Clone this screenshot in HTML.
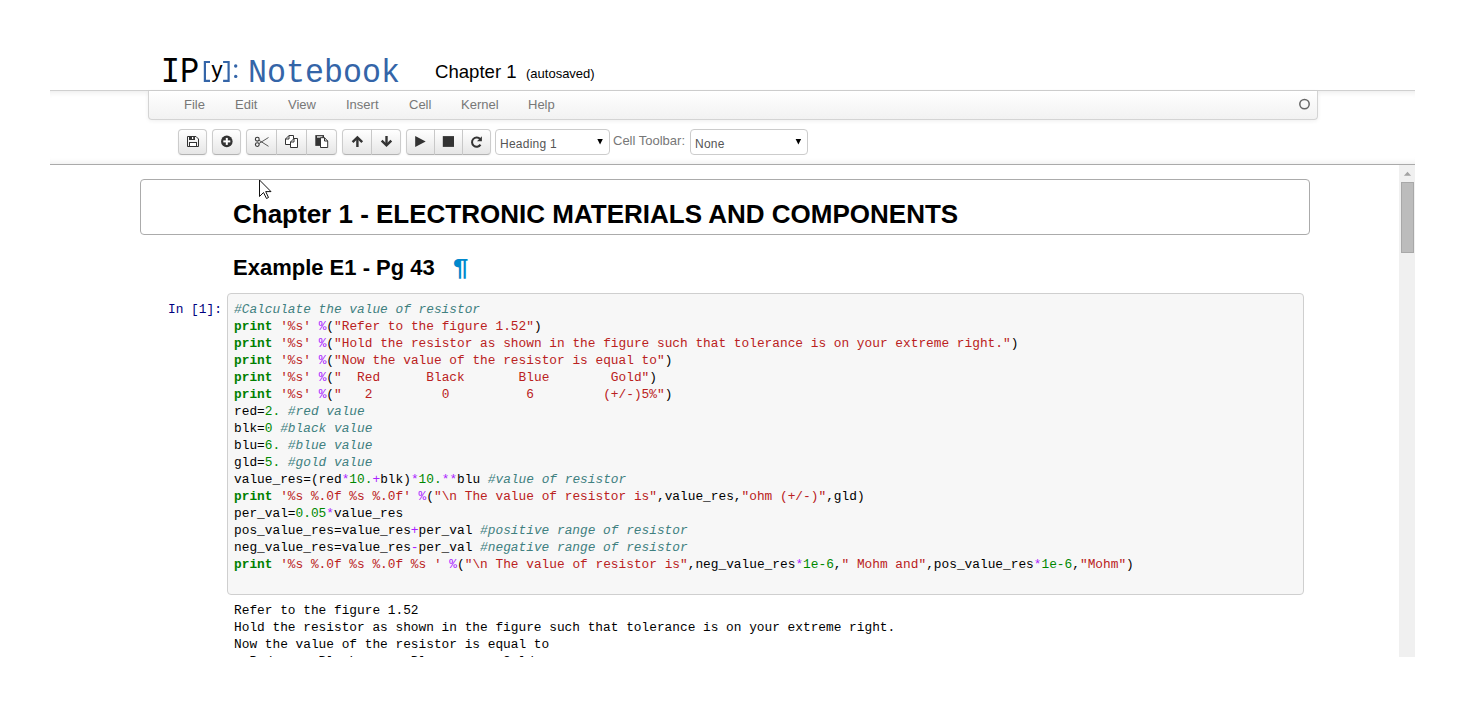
<!DOCTYPE html>
<html><head><meta charset="utf-8">
<style>
html,body{margin:0;padding:0;background:#fff;width:1465px;height:708px;overflow:hidden;position:relative;}
body{font-family:"Liberation Sans",sans-serif;color:#000;}
.abs{position:absolute;}
#title{position:absolute;left:435px;top:60px;font-size:18.6px;white-space:nowrap;line-height:24px;}
#title small{position:absolute;left:91px;top:2px;font-size:13px;}
#hdr{position:absolute;left:50px;top:90px;width:1365px;height:75px;border-top:1px solid #d0d0d0;border-bottom:1px solid #aaa;box-sizing:border-box;
 box-shadow:inset 0 7px 7px -7px rgba(0,0,0,.12), inset 0 -7px 7px -7px rgba(0,0,0,.10);}
#menubar{position:absolute;left:148px;top:91px;width:1170px;height:29px;box-sizing:border-box;border:1px solid #d4d4d4;border-top:none;border-radius:0 0 4px 4px;
 background:linear-gradient(#fff,#f2f2f2);box-shadow:0 1px 4px rgba(0,0,0,.065);}
#menubar span{position:absolute;top:6px;font-size:13px;color:#777;line-height:15px;}
.btn{position:absolute;top:129px;height:26px;box-sizing:border-box;border:1px solid #ccc;border-bottom-color:#b3b3b3;border-radius:4px;background:linear-gradient(#fff,#e6e6e6);box-shadow:inset 0 1px 0 rgba(255,255,255,.2),0 1px 2px rgba(0,0,0,.05);}
.dv{position:absolute;top:129px;width:1px;height:26px;background:#c8c8c8;}
.sel{position:absolute;top:129px;height:26px;box-sizing:border-box;border:1px solid #ccc;border-radius:4px;background:#fff;font-size:12px;color:#555;}
.sel span{position:absolute;left:4px;top:7px;line-height:14px;letter-spacing:0.25px;}
#sb{position:absolute;left:1399px;top:165px;width:16px;height:492px;background:#f0f0f0;}
pre,.code{font-family:"Liberation Mono",monospace;font-size:12.82px;line-height:17px;margin:0;white-space:pre;}
.kw{color:#008000;font-weight:bold;}
.st{color:#BA2121;}
.op{color:#AA22FF;}
.nu{color:#008800;}
.cm{color:#408080;font-style:italic;}
</style></head><body>

<div id="hdr"></div>
<div id="menubar">
  <span style="left:35px">File</span>
  <span style="left:86px">Edit</span>
  <span style="left:139px">View</span>
  <span style="left:197px">Insert</span>
  <span style="left:260px">Cell</span>
  <span style="left:312px">Kernel</span>
  <span style="left:379px">Help</span>
</div>

<div id="title">Chapter 1<small>(autosaved)</small></div>

<div class="btn" style="left:178px;width:29px"></div>
<div class="btn" style="left:212px;width:29px"></div>
<div class="btn" style="left:246px;width:91px"></div>
<div class="dv" style="left:276px"></div><div class="dv" style="left:306px"></div>
<div class="btn" style="left:342px;width:59px"></div>
<div class="dv" style="left:371px"></div>
<div class="btn" style="left:406px;width:85px"></div>
<div class="dv" style="left:434px"></div><div class="dv" style="left:462px"></div>
<div class="sel" style="left:495px;width:115px"><span>Heading 1</span></div>
<div class="abs" style="left:613px;top:133px;font-size:13px;color:#777;line-height:15px;">Cell Toolbar:</div>
<div class="sel" style="left:690px;width:118px"><span>None</span></div>

<div class="abs" style="left:140px;top:179px;width:1170px;height:56px;box-sizing:border-box;border:1px solid #ababab;border-radius:4px;"></div>
<div class="abs" id="h1" style="left:233px;top:198px;font-size:26px;font-weight:bold;line-height:32px;white-space:nowrap;">Chapter 1 - ELECTRONIC MATERIALS AND COMPONENTS</div>
<div class="abs" id="h2" style="left:233px;top:255px;font-size:22px;font-weight:bold;line-height:26px;white-space:nowrap;">Example E1 - Pg 43</div>
<div class="abs" style="left:453px;top:254px;font-size:24px;font-weight:bold;line-height:28px;color:#0088cc;transform:scaleX(1.15);transform-origin:0 0;">&para;</div>
<div class="abs code" style="left:168px;top:301px;color:#000080;">In [1]:</div>
<div class="abs" style="left:227px;top:293px;width:1077px;height:302px;box-sizing:border-box;border:1px solid #cfcfcf;border-radius:4px;background:#f7f7f7;"></div>
<pre class="abs" id="code" style="left:234px;top:301px;"><span class="cm">#Calculate the value of resistor</span>
<span class="kw">print</span> <span class="st">'%s'</span> <span class="op">%</span>(<span class="st">"Refer to the figure 1.52"</span>)
<span class="kw">print</span> <span class="st">'%s'</span> <span class="op">%</span>(<span class="st">"Hold the resistor as shown in the figure such that tolerance is on your extreme right."</span>)
<span class="kw">print</span> <span class="st">'%s'</span> <span class="op">%</span>(<span class="st">"Now the value of the resistor is equal to"</span>)
<span class="kw">print</span> <span class="st">'%s'</span> <span class="op">%</span>(<span class="st">"  Red      Black       Blue        Gold"</span>)
<span class="kw">print</span> <span class="st">'%s'</span> <span class="op">%</span>(<span class="st">"   2         0          6         (+/-)5%"</span>)
red=<span class="nu">2.</span> <span class="cm">#red value</span>
blk=<span class="nu">0</span> <span class="cm">#black value</span>
blu=<span class="nu">6.</span> <span class="cm">#blue value</span>
gld=<span class="nu">5.</span> <span class="cm">#gold value</span>
value_res=(red<span class="op">*</span><span class="nu">10.</span><span class="op">+</span>blk)<span class="op">*</span><span class="nu">10.</span><span class="op">**</span>blu <span class="cm">#value of resistor</span>
<span class="kw">print</span> <span class="st">'%s %.0f %s %.0f'</span> <span class="op">%</span>(<span class="st">"\n The value of resistor is"</span>,value_res,<span class="st">"ohm (+/-)"</span>,gld)
per_val=<span class="nu">0.05</span><span class="op">*</span>value_res
pos_value_res=value_res<span class="op">+</span>per_val <span class="cm">#positive range of resistor</span>
neg_value_res=value_res<span class="op">-</span>per_val <span class="cm">#negative range of resistor</span>
<span class="kw">print</span> <span class="st">'%s %.0f %s %.0f %s '</span> <span class="op">%</span>(<span class="st">"\n The value of resistor is"</span>,neg_value_res<span class="op">*</span><span class="nu">1e-6</span>,<span class="st">" Mohm and"</span>,pos_value_res<span class="op">*</span><span class="nu">1e-6</span>,<span class="st">"Mohm"</span>)</pre>
<div class="abs" style="left:50px;top:165px;width:1349px;height:492px;overflow:hidden;">
<pre class="abs" id="out" style="left:184px;top:437px;">Refer to the figure 1.52
Hold the resistor as shown in the figure such that tolerance is on your extreme right.
Now the value of the resistor is equal to
  Red      Black       Blue        Gold
</pre></div>
<div id="sb"></div>

<svg class="abs" style="left:0;top:0" width="1465" height="708" viewBox="0 0 1465 708">
 <!-- logo -->
 <text x="160.7" y="81.7" font-family="Liberation Mono" font-size="37.5" fill="#000" textLength="38.5" lengthAdjust="spacingAndGlyphs">IP</text>
 <path d="M210,62 H204.9 V80.8 H210 M223.1,62 H228.6 V80.8 H223.1" fill="none" stroke="#3465a8" stroke-width="2.2"/>
 <circle cx="235.7" cy="66" r="1.7" fill="#3465a8"/>
 <circle cx="235.7" cy="76.4" r="1.7" fill="#3465a8"/>
 <text x="211.5" y="76.6" font-family="Liberation Sans" font-size="22" fill="#000">y</text>
 <text x="248" y="81.7" font-family="Liberation Mono" font-size="33" fill="#3465a8" textLength="152" lengthAdjust="spacingAndGlyphs">Notebook</text>
 <!-- kernel indicator -->
 <circle cx="1304.5" cy="104.1" r="4.7" fill="none" stroke="#666" stroke-width="1.5"/>
 <!-- save -->
 <g fill="none" stroke="#333" stroke-width="1">
  <path d="M187.5,136.5 H196 L198.5,139 V146.5 H187.5 Z"/>
  <rect x="189.5" y="142.5" width="7" height="4" fill="#fff"/>
 </g>
 <rect x="189" y="136" width="6" height="4" fill="#333"/>
 <rect x="192" y="137" width="1.2" height="2" fill="#fff"/>
 <!-- plus circle -->
 <circle cx="226.8" cy="141.4" r="5.8" fill="#333"/>
 <rect x="225.8" y="137.9" width="2" height="7" fill="#fff"/>
 <rect x="223.3" y="140.4" width="7" height="2" fill="#fff"/>
 <!-- scissors -->
 <g fill="none" stroke="#333" stroke-width="1.1">
  <circle cx="257.3" cy="139.2" r="1.9"/>
  <circle cx="257.3" cy="144.6" r="1.9"/>
  <path d="M259,140.3 L268.5,146.3 M259,143.5 L268.5,137.5" stroke-width="0.8"/>
 </g>
 <!-- copy -->
 <g fill="#fff" stroke="#333" stroke-width="1">
  <path d="M289,135.5 H293.5 V144.5 H285.5 V139 Z M289,135.5 V139 H285.5"/>
  <path d="M294,138.5 H297.5 V147.5 H290.5 V142 Z M294,138.5 V142 H290.5"/>
 </g>
 <!-- paste -->
 <rect x="315.3" y="135.1" width="8.7" height="10.8" fill="#333"/>
 <rect x="317" y="136.3" width="5.5" height="1.3" fill="#fff"/>
 <path d="M320.5,137.7 H324.5 L327.7,141 V147.5 H320.5 Z M324.5,137.7 V141 H327.7" fill="#fff" stroke="#333" stroke-width="1"/>
 <!-- up/down -->
 <g fill="none" stroke="#333" stroke-width="2.4">
  <path d="M352.6,142.2 L357.4,137.4 L362.2,142.2"/>
  <path d="M357.4,138 V147"/>
  <path d="M381.7,140.6 L386.5,145.4 L391.3,140.6"/>
  <path d="M386.5,136 V145"/>
 </g>
 <!-- play stop refresh -->
 <path d="M415.2,136.1 L425.7,141.5 L415.2,146.9 Z" fill="#333"/>
 <rect x="442.8" y="136.1" width="11.2" height="10.8" fill="#333"/>
 <path d="M480.2,139.2 A4.6,4.6 0 1 0 480.5,144.6" fill="none" stroke="#333" stroke-width="2"/>
 <path d="M481.9,136.3 V141.2 H477 Z" fill="#333"/>
 <!-- select arrows -->
 <path d="M597.3,139.1 H602.8 L600.05,144.6 Z" fill="#000"/>
 <path d="M795.6,139.1 H801.1 L798.35,144.6 Z" fill="#000"/>
 <!-- scrollbar -->
 <path d="M1403.9,175.8 H1411.1 L1407.5,171.8 Z" fill="#a3a3a3"/>
 <rect x="1401.5" y="182.5" width="12" height="70" fill="#bcbcbc" stroke="#a8a8a8" stroke-width="1"/>
 <!-- cursor -->
 <path d="M259.5,180 V196.5 L263.5,192.5 L266.5,198.5 L268.5,197.5 L265.7,191.6 L271,191.6 Z" fill="#fff" stroke="#111" stroke-width="1" stroke-linejoin="miter"/>
</svg>
</body></html>
